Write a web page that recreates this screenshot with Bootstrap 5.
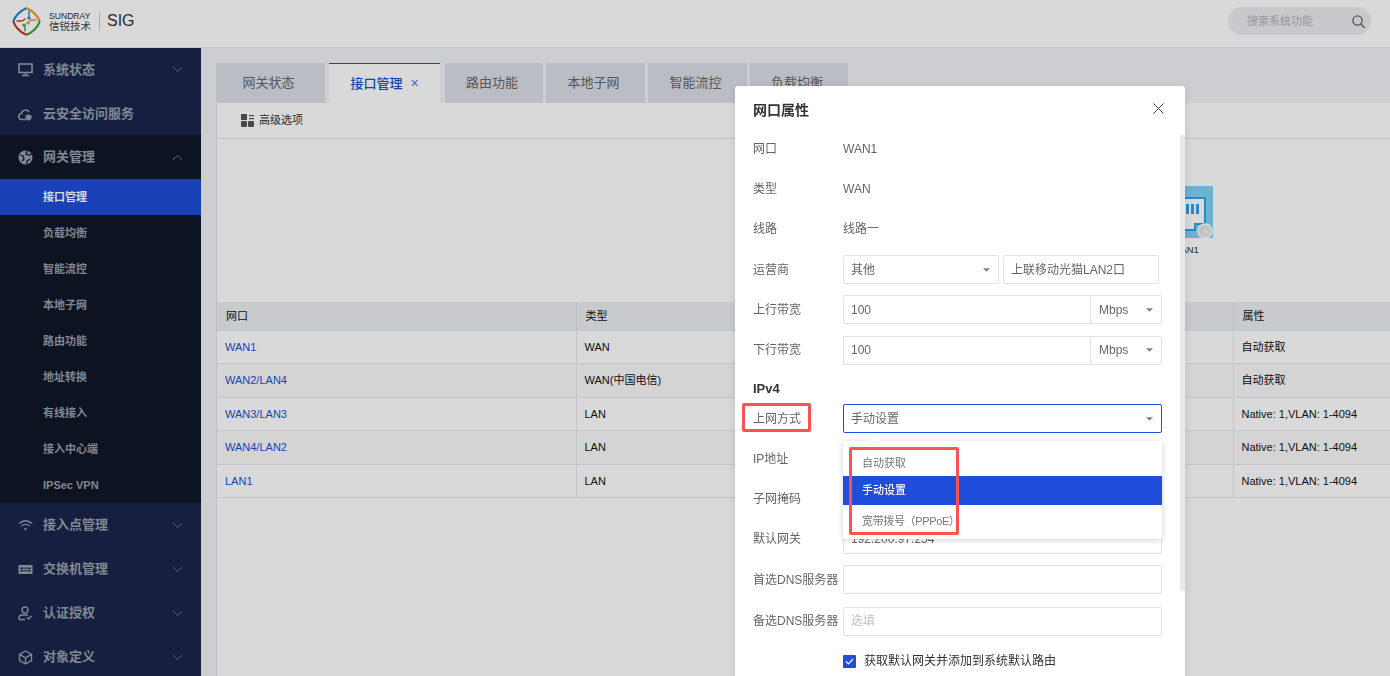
<!DOCTYPE html>
<html lang="zh-CN"><head><meta charset="utf-8"><title>网口属性</title>
<link href="https://cdn.jsdelivr.net/npm/bootstrap@5.3.0/dist/css/bootstrap.min.css" rel="stylesheet">
<style>
html,body{height:676px;overflow:hidden}
body{font-family:"Liberation Sans","Noto Sans CJK SC",sans-serif;font-size:12px;background:#f0f2f6;color:#333}
.top-head{height:48px;background:#fff;border-bottom:1px solid #e6e8ee;padding:0 6px 5px 12px;padding-right:19px}
.brand-a{font-size:8.6px;line-height:10px;color:#333}
.brand-b{font-size:10.5px;line-height:11px;color:#444}
.brand-sep{width:1px;height:18px;background:#c8c8c8;margin:0 7px 0 8px}
.brand-sig{font-size:16px;color:#333}
.find-box{width:143px;height:28px;border-radius:14px;background:#ebecf1;padding:0 6px 0 19px;color:#b0b3bc;font-size:11px}
.body-wrap{height:628px}
.side-nav{width:201px;flex:none;background:#1a254b;overflow:hidden}
.side-item{height:44px;padding:0 18px 0 18px;color:#97a0ae;font-size:13px;font-weight:700}
.side-item svg.ico{width:15px;height:15px;margin-right:10px;flex:none}
.side-item .chev{margin-left:auto;width:11px;height:7px}
.side-first{height:43px}
.side-second{padding-top:2px}
.side-group{background:#111729}
.side-sub{height:36px;padding-left:43px;color:#97a0ae;font-size:11px;font-weight:700}
.side-sub.on{background:#204dda;color:#fff}
.main-col{padding:15px 0 0 15px;min-width:0}
.tab-strip{height:40px;gap:0;border:0}
.tab-one{height:40px;background:#dbdee6;color:#666;font-size:13px;margin-right:3px;border-bottom:1px solid #dfe2ea;padding-right:4px}
.tab-one.on{background:#fff;color:#204dda;font-weight:500;border-top:1px solid #204dda;border-bottom:0;margin-right:5px;margin-left:1px;padding-right:0}
.tab-x{font-size:14px;margin-left:8px;color:#5b7be0}
.pane-box{background:#fff;height:573px;border-left:1px solid #dfe2ea}
.tool-row{height:36px;padding-left:24px;border-bottom:1px solid #e0e2e8;font-size:11px;color:#333}
.tool-gap{margin-left:5px}
.port-area{height:163px;padding:47px 177px 0 0;justify-content:flex-end}
.port-one{width:52px;text-align:center;font-size:9.5px;color:#333}
.port-cap{margin-top:5px}
.port-pic{width:52px;height:52px;background:#7ed3f5;display:block}
.port-table{font-size:11px;table-layout:fixed;margin:0;--bs-table-border-color:#e6e8ee;width:100%}
.port-table th{height:28px;padding:0 9px;background:#ebeef3;font-weight:400;color:#111;vertical-align:middle;border-right:1px solid #e0e2e8}
.port-table td{height:33.5px;padding:0 8px;vertical-align:middle;color:#111;border-right:1px solid #e6e8ee}
.port-table th:last-child,.port-table td:last-child{border-right:0}
.port-table tr:nth-child(even) td{background:#fafafa}
.port-table a{color:#204dda;text-decoration:none}
.dim-layer{position:fixed;inset:0;background:rgba(0,0,0,.15);z-index:10}
.prop-dlg{position:absolute;left:735px;top:86px;width:450px;height:620px;z-index:20;border:0;border-radius:3px;background:#fff;padding:0 23px 0 18px;box-shadow:0 2px 8px rgba(0,0,0,.12);display:block;color:#666}
.dlg-head{height:42.6px;padding:7px 0 0;border:0}
.dlg-title{font-size:14px;font-weight:700;color:#333}
.dlg-close{background:none;border:0;padding:0;width:11px;height:11px;line-height:0;margin-top:-5px;margin-right:-2px}
.prop-row{height:40.3px}
.prop-lab{width:90px;flex:none;color:#666}
.prop-val{color:#666}
.row-nudge{margin-top:1px}
.ctl{height:29px;border:1px solid #e1e2e8;border-radius:2px;font-size:12px;color:#666;padding:0 7px;background-color:#fff;box-shadow:none}
.ctl::placeholder{color:#c0c2c9}
.form-select.ctl{padding:0 20px 0 7px;background-size:7px 4px;background-position:right 8px center;background-image:url("data:image/svg+xml,%3Csvg xmlns='http://www.w3.org/2000/svg' viewBox='0 0 8 4'%3E%3Cpath d='M0 0h8L4 4z' fill='%23808080'/%3E%3C/svg%3E")}
.ctl-wide{width:319px}
.sel-half{width:156px;flex:none}
.inp-half{width:156px;flex:none;margin-left:4px;padding-bottom:3px}
.input-group>.form-select.ctl.unit-sel{width:72px;flex:0 0 72px;border-left:1px solid #e1e2e8;margin-left:0;padding-left:8px;border-radius:0 2px 2px 0}
.input-group>.form-control.ctl{border-right:0}
.form-select.ctl.focus-on{border-color:#1f4fe0}
.ipv-head{height:28px;padding-top:9px;font-size:13px;font-weight:700;color:#333}
.opt-menu{position:absolute;left:108px;top:355px;width:319px;height:98px;background:#fff;border-radius:2px;box-shadow:0 1px 6px rgba(0,0,0,.18);z-index:3;padding:0;margin:0;list-style:none;border:0;display:block}
.opt-menu::before{content:"";position:absolute;left:28px;top:-4px;width:8px;height:8px;background:#fff;transform:rotate(45deg)}
.opt-line{height:29px;padding:0 19px;font-size:11px;color:#777;display:flex;align-items:center;position:relative}
.opt-line:first-child{margin-top:6px;padding-top:3px}
.opt-line.on{background:#204dda;color:#fff;font-weight:500;margin-top:0}
.opt-line:last-child{margin-top:2px;letter-spacing:-.35px}
.mark-box{position:absolute;border:3px solid #fb5252;border-radius:2px;z-index:5;pointer-events:none}
.mark-a{left:7px;top:317px;width:69px;height:29px}
.mark-b{left:114px;top:361px;width:110px;height:88px}
.bar-thumb{position:absolute;right:0;top:49px;width:5px;height:456px;background:#e8e9ee;border-radius:2px}
.chk-mark{width:13px;height:13px;background:#204dda;margin-left:90px;margin-right:8px;flex:none;display:flex;align-items:center;justify-content:center;border-radius:1px}
.chk-text{color:#333}
</style></head>
<body>
<header class="top-head d-flex align-items-center justify-content-between">
  <div class="d-flex align-items-center">
    <svg width="29" height="29" viewBox="0 0 29 29" fill="none" stroke-width="2.200" stroke-linecap="round" stroke-linejoin="round">
      <path d="M1.500 14 C3 9 9 3 14 1.500" stroke="#1c86c8"/>
      <path d="M15 1.500 C20 3 26 9 27.500 14" stroke="#e8a020"/>
      <path d="M27.500 15 C26 20 20 26 15 27.500" stroke="#3aa040"/>
      <path d="M14 27.500 C9 26 3 20 1.500 15" stroke="#d03030"/>
      <g stroke-width="1.400"><path d="M17 4v7" stroke="#1c86c8"/><path d="M24 13h-5l-3 3" stroke="#e8a020"/><path d="M13 24v-5" stroke="#3aa040"/><path d="M5 14h5l3-2" stroke="#d03030"/></g>
      <circle cx="17" cy="11" r="1.600" fill="#1c86c8" stroke="none"/><circle cx="16" cy="16" r="1.600" fill="#e8a020" stroke="none"/><circle cx="12" cy="18" r="1.600" fill="#3aa040" stroke="none"/>
    </svg>
    <div class="ms-1 ps-1">
      <div class="brand-a">SUNDRAY</div>
      <div class="brand-b">信锐技术</div>
    </div>
    <span class="brand-sep"></span>
    <span class="brand-sig">SIG</span>
  </div>
  <div class="find-box d-flex align-items-center justify-content-between">
    <span>搜索系统功能</span>
    <svg width="13" height="13" viewBox="0 0 13 13" fill="none" stroke="#666" stroke-width="1.400"><circle cx="5.500" cy="5.500" r="4.600"/><path d="M9 9l3.400 3.400" stroke-linecap="round"/></svg>
  </div>
</header>
<div class="body-wrap d-flex">
  <nav class="side-nav">
    <div class="side-item side-first d-flex align-items-center">
      <svg class="ico" viewBox="0 0 15 15" fill="none" stroke="currentColor" stroke-width="1.600"><rect x="1" y="2" width="13" height="8.500"/><path d="M7.500 11v2.500M4 13.500h7"/></svg>系统状态
      <svg class="chev" viewBox="0 0 11 7" fill="none" stroke="#6c7487"><path d="M1 1l4.500 4.500L10 1"/></svg>
    </div>
    <div class="side-item side-second d-flex align-items-center">
      <svg class="ico" viewBox="0 0 15 15" fill="none" stroke="currentColor" stroke-width="1.500"><path d="M8 12.500H4a3 3 0 0 1-.4-6A4 4 0 0 1 11 5"/><path d="M10.500 7.500l3 1v2.500c0 1.200-1.500 2-3 2.700-1.500-.7-3-1.500-3-2.700V8.500z" fill="currentColor" stroke="none"/></svg>云安全访问服务
    </div>
    <div class="side-group">
      <div class="side-item d-flex align-items-center">
        <svg class="ico" viewBox="0 0 15 15"><circle cx="7.500" cy="7.500" r="7" fill="currentColor"/><path d="M2 5l3 1 1 3-2 2M9 1l-1 3 3 1 3-1M9 14l0-3 3-2" fill="none" stroke="#111729" stroke-width="1.300"/></svg>网关管理
        <svg class="chev" viewBox="0 0 11 7" fill="none" stroke="#6c7487"><path d="M1 6l4.500-4.500L10 6"/></svg>
      </div>
      <div class="side-sub on d-flex align-items-center">接口管理</div>
      <div class="side-sub d-flex align-items-center">负载均衡</div>
      <div class="side-sub d-flex align-items-center">智能流控</div>
      <div class="side-sub d-flex align-items-center">本地子网</div>
      <div class="side-sub d-flex align-items-center">路由功能</div>
      <div class="side-sub d-flex align-items-center">地址转换</div>
      <div class="side-sub d-flex align-items-center">有线接入</div>
      <div class="side-sub d-flex align-items-center">接入中心端</div>
      <div class="side-sub d-flex align-items-center">IPSec VPN</div>
    </div>
    <div class="side-item d-flex align-items-center">
      <svg class="ico" viewBox="0 0 15 15" fill="none" stroke="currentColor" stroke-width="1.400"><path d="M1 5.500c4-3.500 9-3.500 13 0M3.500 8c2.500-2 5.500-2 8 0"/><circle cx="7.500" cy="11" r="1.200" fill="currentColor" stroke="none"/></svg>接入点管理
      <svg class="chev" viewBox="0 0 11 7" fill="none" stroke="#6c7487"><path d="M1 1l4.500 4.500L10 1"/></svg>
    </div>
    <div class="side-item d-flex align-items-center">
      <svg class="ico" viewBox="0 0 15 15"><rect x="0.500" y="3" width="14" height="9" fill="currentColor"/><path d="M2.500 5.500h3v4h-3zM6.500 5.500h2v4h-2zM9.500 5.500h3v4h-3z" fill="#1a254b"/><path d="M2.500 7.500h10" stroke="currentColor"/></svg>交换机管理
      <svg class="chev" viewBox="0 0 11 7" fill="none" stroke="#6c7487"><path d="M1 1l4.500 4.500L10 1"/></svg>
    </div>
    <div class="side-item d-flex align-items-center">
      <svg class="ico" viewBox="0 0 15 15" fill="none" stroke="currentColor" stroke-width="1.400"><circle cx="7" cy="4" r="3"/><path d="M1 13.500v-1.500c0-2 1.500-3 3-3h6M1 13.500h6M9 11.500l1.500 1.500 3-3"/></svg>认证授权
      <svg class="chev" viewBox="0 0 11 7" fill="none" stroke="#6c7487"><path d="M1 1l4.500 4.500L10 1"/></svg>
    </div>
    <div class="side-item d-flex align-items-center">
      <svg class="ico" viewBox="0 0 15 15" fill="none" stroke="currentColor" stroke-width="1.400" stroke-linejoin="round"><path d="M7.500 1l6 3.400v6.200l-6 3.400-6-3.400V4.400zM1.500 4.400l6 3.400 6-3.400M7.500 7.800V14"/></svg>对象定义
      <svg class="chev" viewBox="0 0 11 7" fill="none" stroke="#6c7487"><path d="M1 1l4.500 4.500L10 1"/></svg>
    </div>
  </nav>
  <main class="main-col flex-grow-1">
    <div class="tab-strip d-flex">
      <div class="tab-one d-flex align-items-center justify-content-center" style="width:109px">网关状态</div>
      <div class="tab-one on d-flex align-items-center justify-content-center" style="width:111px">接口管理<span class="tab-x">×</span></div>
      <div class="tab-one d-flex align-items-center justify-content-center" style="width:98px">路由功能</div>
      <div class="tab-one d-flex align-items-center justify-content-center" style="width:99px">本地子网</div>
      <div class="tab-one d-flex align-items-center justify-content-center" style="width:99px">智能流控</div>
      <div class="tab-one d-flex align-items-center justify-content-center" style="width:98px">负载均衡</div>
    </div>
    <div class="pane-box">
      <div class="tool-row d-flex align-items-center">
        <svg width="13" height="13" viewBox="0 0 13 13" fill="#555"><rect width="6" height="6"/><path d="M8 1h5v1.200H8zM8 4h5v1.200H8z"/><rect y="7" width="6" height="6" rx="1"/><rect x="7" y="7" width="6" height="6" rx="1"/></svg>
        <span class="tool-gap">高级选项</span>
      </div>
      <div class="port-area d-flex">
        <div class="port-one">
          <svg class="port-pic" viewBox="0 0 52 52"><path d="M4 12h40v26H34v6H14v-6H4z" fill="#fff" stroke="#2aa6e8" stroke-width="2"/><path d="M35 18h3v10h-3zM30 18h3v10h-3zM25 18h3v10h-3z" fill="#2aa6e8"/><circle cx="44" cy="45" r="7" fill="#e4e4e4" stroke="#fff" stroke-width="1.500"/><path d="M45 41l-3 4.500h2.500l-1 3.500 3-4.500H44z" fill="#fff"/></svg>
          <div class="port-cap">LAN1</div>
        </div>
      </div>
      <table class="table port-table">
        <colgroup><col style="width:359px"><col style="width:657px"><col></colgroup>
        <thead><tr><th>网口</th><th>类型</th><th>属性</th></tr></thead>
        <tbody>
          <tr><td><a href="#">WAN1</a></td><td>WAN</td><td>自动获取</td></tr>
          <tr><td><a href="#">WAN2/LAN4</a></td><td>WAN(中国电信)</td><td>自动获取</td></tr>
          <tr><td><a href="#">WAN3/LAN3</a></td><td>LAN</td><td>Native: 1,VLAN: 1-4094</td></tr>
          <tr><td><a href="#">WAN4/LAN2</a></td><td>LAN</td><td>Native: 1,VLAN: 1-4094</td></tr>
          <tr><td><a href="#">LAN1</a></td><td>LAN</td><td>Native: 1,VLAN: 1-4094</td></tr>
        </tbody>
      </table>
    </div>
  </main>
</div>
<div class="dim-layer"></div>
<section class="modal-content prop-dlg">
  <span class="bar-thumb"></span>
  <div class="modal-header dlg-head d-flex align-items-center justify-content-between">
    <span class="dlg-title">网口属性</span>
    <button class="dlg-close" type="button" aria-label="关闭"><svg width="11" height="11" viewBox="0 0 11 11" stroke="#444" fill="none"><path d="M.5.500l10 10M10.500.500l-10 10"/></svg></button>
  </div>
  <div class="prop-row d-flex align-items-center"><span class="prop-lab">网口</span><span class="prop-val">WAN1</span></div>
  <div class="prop-row d-flex align-items-center"><span class="prop-lab">类型</span><span class="prop-val">WAN</span></div>
  <div class="prop-row d-flex align-items-center"><span class="prop-lab">线路</span><span class="prop-val">线路一</span></div>
  <div class="prop-row d-flex align-items-center"><span class="prop-lab">运营商</span>
    <select class="form-select ctl sel-half"><option>其他</option></select>
    <input class="form-control ctl inp-half" value="上联移动光猫LAN2口">
  </div>
  <div class="prop-row d-flex align-items-center"><span class="prop-lab">上行带宽</span>
    <div class="input-group ctl-wide flex-nowrap"><input class="form-control ctl" value="100"><select class="form-select ctl unit-sel"><option>Mbps</option></select></div>
  </div>
  <div class="prop-row d-flex align-items-center"><span class="prop-lab">下行带宽</span>
    <div class="input-group ctl-wide flex-nowrap"><input class="form-control ctl" value="100"><select class="form-select ctl unit-sel"><option>Mbps</option></select></div>
  </div>
  <div class="ipv-head">IPv4</div>
  <div class="prop-row d-flex align-items-center"><span class="prop-lab">上网方式</span>
    <select class="form-select ctl ctl-wide focus-on"><option>手动设置</option></select>
  </div>
  <div class="prop-row d-flex align-items-center"><span class="prop-lab">IP地址</span><input class="form-control ctl ctl-wide"></div>
  <div class="prop-row d-flex align-items-center"><span class="prop-lab">子网掩码</span><input class="form-control ctl ctl-wide"></div>
  <div class="prop-row d-flex align-items-center"><span class="prop-lab">默认网关</span><input class="form-control ctl ctl-wide" value="192.200.97.254"></div>
  <div class="prop-row d-flex align-items-center"><span class="prop-lab">首选DNS服务器</span><input class="form-control ctl ctl-wide"></div>
  <div class="prop-row row-nudge d-flex align-items-center"><span class="prop-lab">备选DNS服务器</span><input class="form-control ctl ctl-wide" placeholder="选填"></div>
  <div class="prop-row d-flex align-items-center"><span class="chk-mark"><svg width="9" height="7" viewBox="0 0 9 7" fill="none" stroke="#fff" stroke-width="1.200"><path d="M1 3.500l2.500 2.500L8 1"/></svg></span><span class="chk-text">获取默认网关并添加到系统默认路由</span></div>
  <ul class="opt-menu dropdown-menu">
    <li class="opt-line">自动获取</li>
    <li class="opt-line on">手动设置</li>
    <li class="opt-line">宽带拨号（PPPoE）</li>
  </ul>
  <span class="mark-box mark-a"></span>
  <span class="mark-box mark-b"></span>
</section>
<script src="https://cdn.jsdelivr.net/npm/bootstrap@5.3.0/dist/js/bootstrap.bundle.min.js"></script>
</body></html>
